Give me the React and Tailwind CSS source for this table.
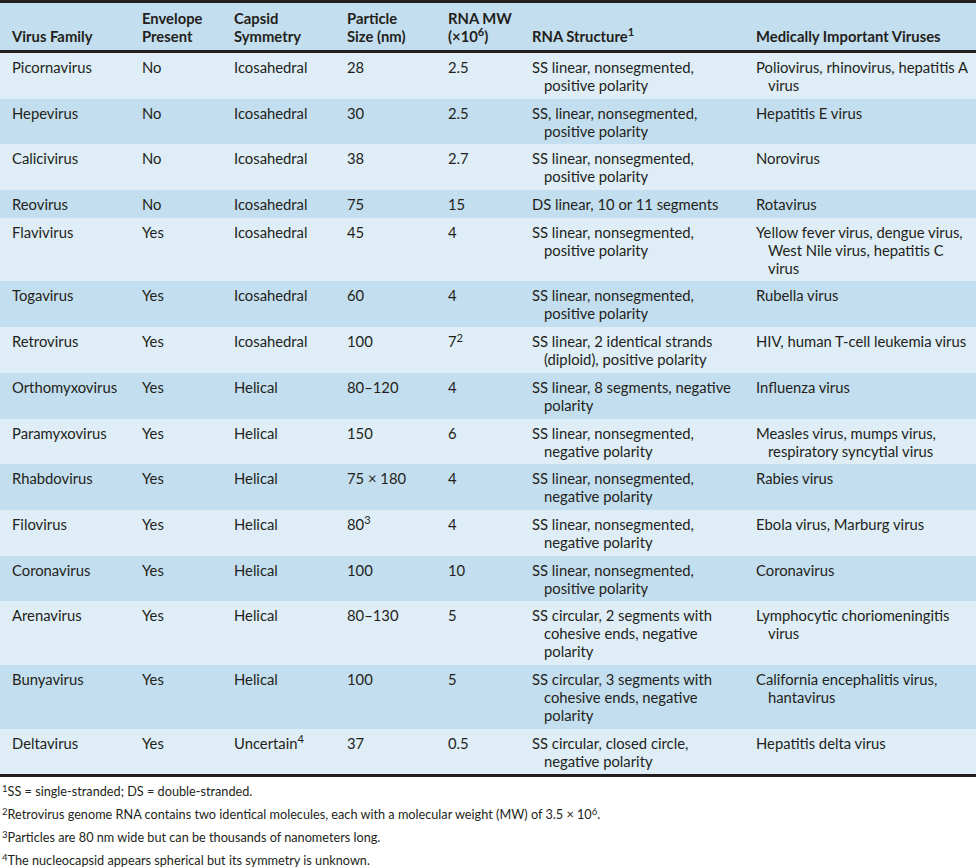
import React from 'react';

// Virus families table with footnotes
const rows = [
  ['Picornavirus', 'No', 'Icosahedral', '28', '2.5', ['SS linear, nonsegmented,', 'positive polarity'], ['Poliovirus, rhinovirus, hepatitis A', 'virus']],
  ['Hepevirus', 'No', 'Icosahedral', '30', '2.5', ['SS, linear, nonsegmented,', 'positive polarity'], ['Hepatitis E virus']],
  ['Calicivirus', 'No', 'Icosahedral', '38', '2.7', ['SS linear, nonsegmented,', 'positive polarity'], ['Norovirus']],
  ['Reovirus', 'No', 'Icosahedral', '75', '15', ['DS linear, 10 or 11 segments'], ['Rotavirus']],
  ['Flavivirus', 'Yes', 'Icosahedral', '45', '4', ['SS linear, nonsegmented,', 'positive polarity'], ['Yellow fever virus, dengue virus,', 'West Nile virus, hepatitis C', 'virus']],
  ['Togavirus', 'Yes', 'Icosahedral', '60', '4', ['SS linear, nonsegmented,', 'positive polarity'], ['Rubella virus']],
  ['Retrovirus', 'Yes', 'Icosahedral', '100', <>7<sup>2</sup></>, ['SS linear, 2 identical strands', '(diploid), positive polarity'], ['HIV, human T-cell leukemia virus']],
  ['Orthomyxovirus', 'Yes', 'Helical', '80–120', '4', ['SS linear, 8 segments, negative', 'polarity'], ['Influenza virus']],
  ['Paramyxovirus', 'Yes', 'Helical', '150', '6', ['SS linear, nonsegmented,', 'negative polarity'], ['Measles virus, mumps virus,', 'respiratory syncytial virus']],
  ['Rhabdovirus', 'Yes', 'Helical', '75 × 180', '4', ['SS linear, nonsegmented,', 'negative polarity'], ['Rabies virus']],
  ['Filovirus', 'Yes', 'Helical', <>80<sup>3</sup></>, '4', ['SS linear, nonsegmented,', 'negative polarity'], ['Ebola virus, Marburg virus']],
  ['Coronavirus', 'Yes', 'Helical', '100', '10', ['SS linear, nonsegmented,', 'positive polarity'], ['Coronavirus']],
  ['Arenavirus', 'Yes', 'Helical', '80–130', '5', ['SS circular, 2 segments with', 'cohesive ends, negative', 'polarity'], ['Lymphocytic choriomeningitis', 'virus']],
  ['Bunyavirus', 'Yes', 'Helical', '100', '5', ['SS circular, 3 segments with', 'cohesive ends, negative', 'polarity'], ['California encephalitis virus,', 'hantavirus']],
  ['Deltavirus', 'Yes', <>Uncertain<sup>4</sup></>, '37', '0.5', ['SS circular, closed circle,', 'negative polarity'], ['Hepatitis delta virus']],
];

function Lines({ lines }) {
  return lines.map((l, i) => (
    <div key={i} className={i > 0 ? 'pl-3' : ''}>{l}</div>
  ));
}

export default function App() {
  return (
    <div className="w-[976px] bg-white text-[#231f20] text-[14.8px] leading-[18px]" style={{ fontFamily: 'Lato, "Open Sans", sans-serif' }}>
      <table className="w-full table-fixed border-collapse">
        <colgroup>
          <col className="w-[130px]" />
          <col className="w-[92px]" />
          <col className="w-[113px]" />
          <col className="w-[101px]" />
          <col className="w-[84px]" />
          <col className="w-[224px]" />
          <col />
        </colgroup>
        <thead>
          <tr className="bg-[#c3deee] border-t-[3px] border-b-[3px] border-[#231f20] font-bold text-left align-bottom">
            <th className="pl-3 pt-[6px] pb-[5px]">Virus Family</th>
            <th className="pl-3 pt-[6px] pb-[5px]">Envelope<br />Present</th>
            <th className="pl-3 pt-[6px] pb-[5px]">Capsid<br />Symmetry</th>
            <th className="pl-3 pt-[6px] pb-[5px]">Particle<br />Size (nm)</th>
            <th className="pl-3 pt-[6px] pb-[5px]">RNA MW<br />(×10<sup>6</sup>)</th>
            <th className="pl-3 pt-[6px] pb-[5px]">RNA Structure<sup>1</sup></th>
            <th className="pl-3 pt-[6px] pb-[5px]">Medically Important Viruses</th>
          </tr>
        </thead>
        <tbody className="border-b-[3px] border-[#231f20]">
          {rows.map((r, i) => (
            <tr key={i} className={`align-top ${i % 2 === 0 ? 'bg-[#deedf6]' : 'bg-[#c3deee]'}`}>
              <td className="pl-3 pt-[5px] pb-[4.7px] whitespace-nowrap">{r[0]}</td>
              <td className="pl-3 pt-[5px] pb-[4.7px]">{r[1]}</td>
              <td className="pl-3 pt-[5px] pb-[4.7px] whitespace-nowrap">{r[2]}</td>
              <td className="pl-3 pt-[5px] pb-[4.7px] whitespace-nowrap">{r[3]}</td>
              <td className="pl-3 pt-[5px] pb-[4.7px]">{r[4]}</td>
              <td className="pl-3 pt-[5px] pb-[4.7px] whitespace-nowrap"><Lines lines={r[5]} /></td>
              <td className="pl-3 pt-[5px] pb-[4.7px] whitespace-nowrap"><Lines lines={r[6]} /></td>
            </tr>
          ))}
        </tbody>
      </table>
      <div className="pl-[2px] pt-[3px] text-[12.7px] leading-[23px]">
        <div><sup>1</sup>SS = single-stranded; DS = double-stranded.</div>
        <div><sup>2</sup>Retrovirus genome RNA contains two identical molecules, each with a molecular weight (MW) of 3.5 × 10<sup>6</sup>.</div>
        <div><sup>3</sup>Particles are 80 nm wide but can be thousands of nanometers long.</div>
        <div><sup>4</sup>The nucleocapsid appears spherical but its symmetry is unknown.</div>
      </div>
    </div>
  );
}
